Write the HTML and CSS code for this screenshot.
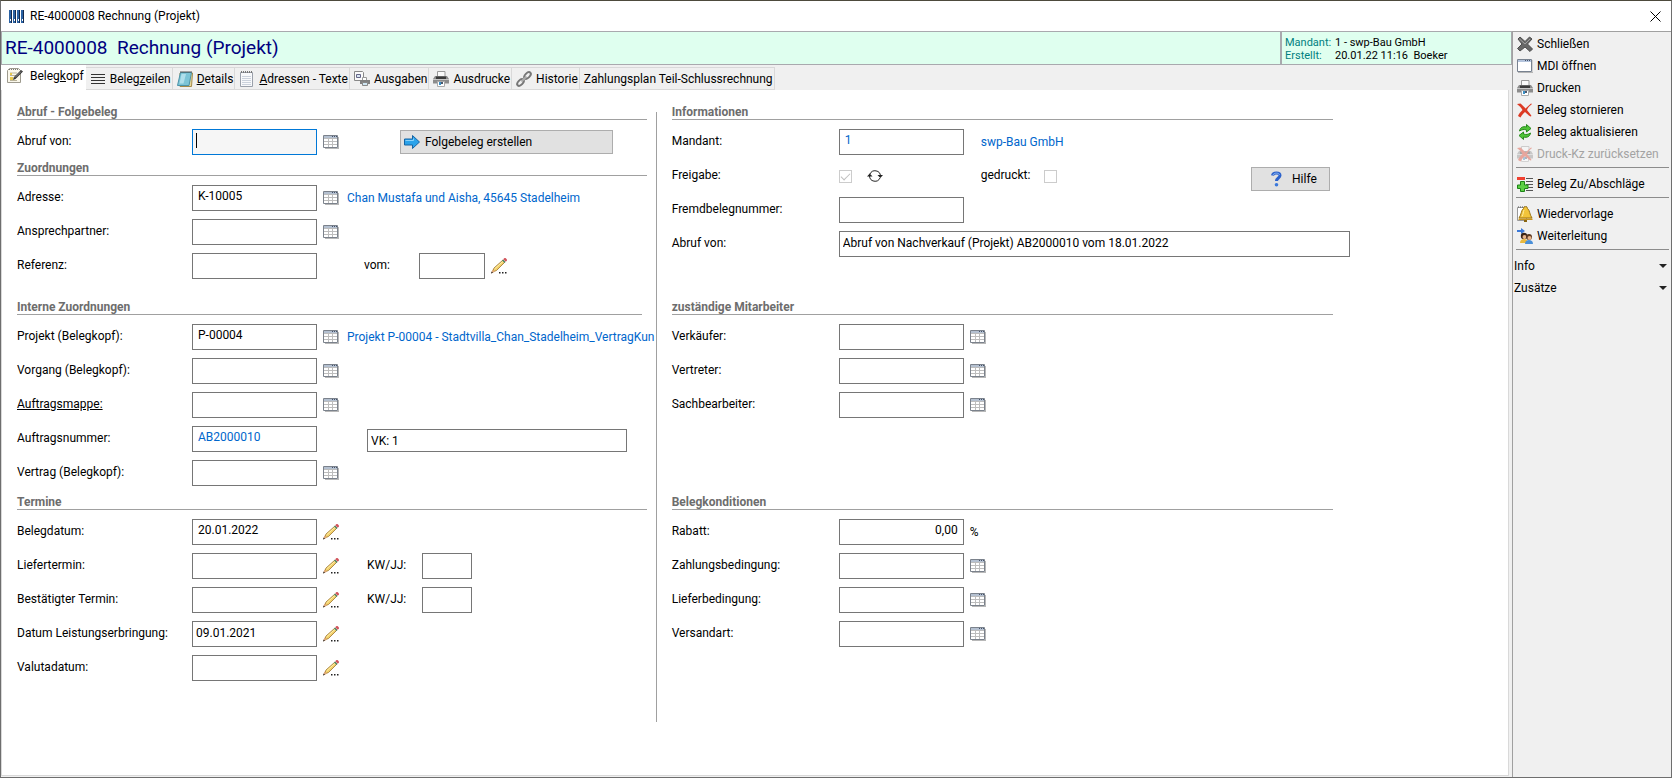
FILE: index.html
```html
<!DOCTYPE html>
<html lang="de">
<head>
    <meta charset="UTF-8">
    <meta name="viewport" content="width=device-width, initial-scale=1.0">
    <title>RE-4000008 Rechnung (Projekt)</title>
    <link rel="stylesheet" href="styles.css">
</head>
<body>
    <!-- icon set -->
    <svg class="sprite" aria-hidden="true">
        <symbol id="i-table" viewBox="0 0 16 14">
            <path d="M2 13.500h14M15.500 2v12" stroke="#b8b8b8" fill="none"/>
            <path d="M.500.500h14v12H.500z" fill="#fff" stroke="#7b828c"/>
            <path d="M1 1h13v2H1z" fill="#b4c0d0"/>
            <path d="M9 1.500h1M11 1.500h1M13 1.500h1" stroke="#46536b"/>
            <path d="M1 3.500h13M1 6.500h13M1 9.500h13M5.500 4v8M9.500 4v8" stroke="#bdbdbd"/>
        </symbol>
        <symbol id="i-pencil" viewBox="0 0 16 16">
            <path d="M1.500 14l1.500-4L12 2l2 2-8.500 8.500z" fill="#f3d06a" stroke="#9a7430" stroke-width=".8"/>
            <path d="M3.500 11L12 3.300" stroke="#fff0a8"/>
            <path d="M11 2.500l2.500 2.500 1-1L12 1.500z" fill="#4f8a6b"/>
            <path d="M12.200 1.200L13.500 0h1L16 1.500v1l-1.300 1.200z" fill="#d2545c"/>
            <path d="M0 15.500L1.500 11.500l2.500 2.300z" fill="#e0a878"/>
            <path d="M0 15.500l.700-2 1.300 1.200z" fill="#222"/>
            <path d="M8 14h1.500v1.500H8zM11 14h1.500v1.500H11zM14 14h1.500v1.500H14z" fill="#222"/>
        </symbol>
        <symbol id="i-arrow" viewBox="0 0 16 16">
            <path d="M.5 5h8V1.500L15.500 8l-7 6.500V11h-8z" fill="#2ba3ea" stroke="#1565a5"/>
            <path d="M1.500 6.500h8v-2" fill="none" stroke="#8ad3fb"/>
        </symbol>
        <symbol id="i-printer" viewBox="0 0 16 16">
            <path d="M4.500 6V.5h7.500V6" fill="#fafafa" stroke="#999"/>
            <path d="M2 5h12l2 3v4.500H0V8z" fill="#8c8c8c"/>
            <path d="M3 5.500h10V8H3z" fill="#3b3b3b"/>
            <path d="M0 8.500h16" stroke="#c8c8c8"/>
            <path d="M4.500 10.500h7v5h-7z" fill="#fff" stroke="#aaa"/>
            <path d="M6 11h2v3H6z" fill="#3a8fc5"/>
            <path d="M8 11h2v2H8z" fill="#4c586c"/>
        </symbol>
        <symbol id="i-edit" viewBox="0 0 16 16">
            <path d="M.5 2.500l2-2h9l2 2v12H.5z" fill="#fbf8ec" stroke="#9d9a8e"/>
            <path d="M2 1.500h9" stroke="#777" stroke-dasharray="1 1"/>
            <path d="M3 5h7M3 7.500h6M3 10h4M3 12.500h7" stroke="#b9b39a"/>
            <path d="M3 5h2v2H3zM3 9h3v3H3z" fill="#e8c84c"/>
            <path d="M6 12l1-3 7-7 2 1.500L8.500 11z" fill="#333"/>
            <path d="M8 9.500L14 3.500" stroke="#999"/>
        </symbol>
        <symbol id="i-lines" viewBox="0 0 16 16">
            <path d="M1 3.500h14M1 6.500h14M1 9.500h14M1 12.500h14" stroke="#333"/>
        </symbol>
        <symbol id="i-notepad" viewBox="0 0 16 16">
            <path d="M3 2h12.500l-1 13.500H3z" fill="#e8d79a" stroke="#a48a4a"/>
            <path d="M3.500 1.500h11L12 14.500H.5z" fill="#7cc4d6" stroke="#4b93a8"/>
            <path d="M4.500 3L2.500 12.500h4L9 3z" fill="#c6ebf3" opacity=".7"/>
            <path d="M3.500 1h11" stroke="#555" stroke-width="2" stroke-dasharray="1 1"/>
        </symbol>
        <symbol id="i-sheet" viewBox="0 0 16 16">
            <path d="M1.500 1.500h12v14h-12z" fill="#f8f9fb" stroke="#9aa0aa"/>
            <path d="M3 7.500h9M3 9.500h9M3 11.500h9M3 13.500h9M3 5.500h9" stroke="#cbd2dc"/>
            <path d="M2 1h11" stroke="#777" stroke-width="2" stroke-dasharray="1 1"/>
        </symbol>
        <symbol id="i-output" viewBox="0 0 16 16">
            <path d="M.500.500h8l1 1V9.500H.5z" fill="#fafafa" stroke="#888"/>
            <path d="M2.500 3.500h4v3h-4z" fill="#d9e6f3" stroke="#668"/>
            <path d="M8.500 9V6.500h4V9" fill="#fff" stroke="#999"/>
            <path d="M6 9h10v4H6z" fill="#808080"/>
            <path d="M8.500 11.500h5v3h-5z" fill="#cfe6f2" stroke="#888"/>
        </symbol>
        <symbol id="i-chain" viewBox="0 0 16 16">
            <g fill="none" stroke="#777" stroke-width="2">
                <ellipse cx="11.500" cy="4.500" rx="4" ry="2.300" transform="rotate(-45 11.500 4.500)"/>
                <ellipse cx="4.500" cy="11.500" rx="4" ry="2.300" transform="rotate(-45 4.500 11.500)"/>
                <path d="M5.500 10.500l5-5" stroke="#aaa"/>
            </g>
        </symbol>
        <symbol id="i-close" viewBox="0 0 16 16">
            <path d="M1 3l2-2 5 4.500L12.500 1 15 3 10.500 8l5 5-2.500 2.500L8 11l-5 4-2.500-2.500L5 8z" fill="#686868" stroke="#4d4d4d"/>
            <path d="M2.500 3L8 8l5-5" fill="none" stroke="#a0a0a0"/>
        </symbol>
        <symbol id="i-window" viewBox="0 0 16 14">
            <path d="M1 13.500h15V1" fill="none" stroke="#b5b5b5"/>
            <path d="M.500.500h14v12H.500z" fill="#fff" stroke="#788290"/>
            <path d="M1 1h13v2H1z" fill="#b4c4dc"/>
            <path d="M8 1.500h1M10 1.500h1M12 1.500h1" stroke="#46536b"/>
        </symbol>
        <symbol id="i-cancel" viewBox="0 0 16 16">
            <path d="M0 2l3.500-.5C6 3.500 7 5 8.500 6.500L14 1.500l1 .5c-2.500 2-4 3.500-5 6 1.500 2 3 3.500 4.500 6l-1 .5c-2.500-1.500-3.500-3-5.500-4.500-2 1.500-3 3-4.500 5.500L1 14c1-2.500 2.500-4 4.500-6C4 5.500 2.500 4 0 2z" fill="#dc3a24"/>
        </symbol>
        <symbol id="i-refresh" viewBox="0 0 16 16">
            <path d="M2.500 7C3 3.500 6 2 9.500 3V.5L14 4.500 9.500 8V6C7 5 5 5.500 2.500 7z" fill="#4fc437" stroke="#278a1c"/>
            <path d="M13.500 9c-.5 3.500-3.500 5-7 4v2.500L2 11.500 6.500 8v2c2.500 1 4.500.5 7-1z" fill="#4fc437" stroke="#278a1c"/>
        </symbol>
        <symbol id="i-lineitems" viewBox="0 0 16 16">
            <path d="M9 2.500h7M9 5.500h7M9 8.500h7M11 11.500h5M9 14.500h7" stroke="#555"/>
            <path d="M0 1h8v3H0z" fill="#ef4030"/>
            <path d="M3.500 5.500h4V9H11v3.500H7.500V15.500h-4v-3H.5V9h3z" fill="#5cd044" stroke="#1d8417"/>
        </symbol>
        <symbol id="i-bell" viewBox="0 0 16 16">
            <path d="M.5 1.500h9v13h-9z" fill="#fff" stroke="#999"/>
            <path d="M1 1h9" stroke="#555" stroke-dasharray="1 1"/>
            <path d="M6.500 2.500c0-2.500 4-2.500 4 0 2.500 2 2 6 4.500 9.500H2C4.500 8.500 4 4.500 6.500 2.500z" fill="#f2c43a" stroke="#9a7312"/>
            <path d="M7 4c-1 2-.5 4-2 6.500" fill="none" stroke="#fff0a0"/>
            <path d="M1.500 12.500h14v1.500h-14z" fill="#c9951d"/>
            <path d="M7 14h3v2H7z" fill="#8a6510"/>
        </symbol>
        <symbol id="i-forward" viewBox="0 0 16 16">
            <path d="M0 2h4V0l4 3-4 3V4H0z" fill="#3a78d8"/>
            <circle cx="7" cy="8" r="3.200" fill="#3a2418"/>
            <circle cx="7.500" cy="9" r="2" fill="#e8b48a"/>
            <path d="M3 15c0-3 2-4 4-4s4 1 4 4z" fill="#eab93c"/>
            <circle cx="12" cy="9" r="3" fill="#5a3820"/>
            <circle cx="12.500" cy="10" r="2" fill="#e8b48a"/>
            <path d="M8 16c0-3 2-4 4-4s4 1 4 4z" fill="#4a8fd8"/>
        </symbol>
        <symbol id="i-sync" viewBox="0 0 16 14">
            <path d="M3 5a5.500 5.500 0 0 1 10.500 2M13 9A5.500 5.500 0 0 1 2.500 7" fill="none" stroke="#222"/>
            <path d="M0 7.500h5.500L2.700 4.500zM10.500 6H16l-2.700 3z" fill="#222"/>
        </symbol>
        <symbol id="i-help" viewBox="0 0 16 16">
            <path d="M4.500 4.500C5 1 12 1 12 4.500c0 2.500-3.500 2.500-3.500 5.500" fill="none" stroke="#2c62cc" stroke-width="3"/>
            <path d="M5 4C6 1.500 11 1.500 11.500 4" fill="none" stroke="#8db8f5"/>
            <circle cx="8.500" cy="13.700" r="1.800" fill="#3a78dc"/>
        </symbol>
        <symbol id="i-folders" viewBox="0 0 16 13">
            <path d="M0 0h3v13H0zM4 0h3v13H4zM8 0h3v13H8zM12 0h3v13h-3z" fill="#2a62a4"/>
            <path d="M2.500 0v13M6.500 0v13M10.500 0v13M14.500 0v13" stroke="#12294d"/>
            <path d="M1 9h1v2H1zM5 9h1v2H5zM9 9h1v2H9zM13 9h1v2h-1z" fill="#fff"/>
        </symbol>
    </svg>

    <div class="window">
        <header class="titlebar">
            <svg class="app-icon"><use href="#i-folders"/></svg>
            <span>RE-4000008 Rechnung (Projekt)</span>
            <button class="close" aria-label="Fenster schließen">
                <svg viewBox="0 0 11 11"><path d="M.500.500l10 10M10.500.500l-10 10" stroke="#000" fill="none"/></svg>
            </button>
        </header>

        <div class="body">
            <main class="main">
                <div class="banner">
                    <h1>RE-4000008  Rechnung (Projekt)</h1>
                    <dl class="meta">
                        <dt>Mandant:</dt><dd>1 - swp-Bau GmbH</dd>
                        <dt>Erstellt:</dt><dd>20.01.22 11:16  Boeker</dd>
                    </dl>
                </div>

                <nav class="tabs">
                    <button class="tab active"><svg><use href="#i-edit"/></svg><span>Beleg<u>k</u>opf</span></button>
                    <button class="tab"><svg><use href="#i-lines"/></svg><span>Beleg<u>z</u>eilen</span></button>
                    <button class="tab"><svg><use href="#i-notepad"/></svg><span><u>D</u>etails</span></button>
                    <button class="tab"><svg><use href="#i-sheet"/></svg><span><u>A</u>dressen - Texte</span></button>
                    <button class="tab"><svg><use href="#i-output"/></svg><span>Ausgaben</span></button>
                    <button class="tab"><svg><use href="#i-printer"/></svg><span>Ausdrucke</span></button>
                    <button class="tab"><svg><use href="#i-chain"/></svg><span>Historie</span></button>
                    <button class="tab"><span>Zahlungsplan Teil-Schlussrechnung</span></button>
                </nav>

                <form class="sheet">
                    <div class="divider"></div>

                    <section class="left">
                        <h2>Abruf - Folgebeleg</h2>
                        <div class="row single">
                            <label for="abruf">Abruf von:</label>
                            <input type="text" id="abruf" class="focused">
                            <button type="button" class="pick" aria-label="Beleg wählen"><svg><use href="#i-table"/></svg></button>
                            <div class="extra wide">
                                <button type="button" class="btn create"><svg><use href="#i-arrow"/></svg>Folgebeleg erstellen</button>
                            </div>
                        </div>
                        <h2>Zuordnungen</h2>
                        <div class="row">
                            <label for="adresse">Adresse:</label>
                            <input type="text" id="adresse" value="K-10005">
                            <button type="button" class="pick" aria-label="Adresse wählen"><svg><use href="#i-table"/></svg></button>
                            <a href="#" class="ref">Chan Mustafa und Aisha, 45645 Stadelheim</a>
                        </div>
                        <div class="row">
                            <label for="partner">Ansprechpartner:</label>
                            <input type="text" id="partner">
                            <button type="button" class="pick" aria-label="Ansprechpartner wählen"><svg><use href="#i-table"/></svg></button>
                        </div>
                        <div class="row">
                            <label for="referenz">Referenz:</label>
                            <input type="text" id="referenz">
                            <span></span>
                            <div class="extra near">
                                <label for="vom">vom:</label>
                                <input type="text" id="vom" class="short">
                                <button type="button" class="pick date" aria-label="Datum wählen"><svg><use href="#i-pencil"/></svg></button>
                            </div>
                        </div>
                    </section>

                    <section class="right">
                        <h2>Informationen</h2>
                        <div class="row">
                            <label for="mandant">Mandant:</label>
                            <input type="text" id="mandant" class="linked" value="1">
                            <span></span>
                            <a href="#" class="ref">swp-Bau GmbH</a>
                        </div>
                        <div class="row">
                            <label for="freigabe">Freigabe:</label>
                            <div class="check-group">
                                <input type="checkbox" id="freigabe" checked disabled>
                                <button type="button" class="sync" aria-label="Freigabe wechseln"><svg><use href="#i-sync"/></svg></button>
                            </div>
                            <span></span>
                            <div class="printed">
                                <label for="gedruckt">gedruckt:</label>
                                <input type="checkbox" id="gedruckt" disabled>
                                <button type="button" class="btn help"><svg><use href="#i-help"/></svg>Hilfe</button>
                            </div>
                        </div>
                        <div class="row">
                            <label for="fremd">Fremdbelegnummer:</label>
                            <input type="text" id="fremd">
                        </div>
                        <div class="row">
                            <label for="abruf-text">Abruf von:</label>
                            <input type="text" id="abruf-text" class="full" value="Abruf von Nachverkauf (Projekt) AB2000010 vom 18.01.2022">
                        </div>
                    </section>

                    <section class="left">
                        <h2 class="narrow">Interne Zuordnungen</h2>
                        <div class="row">
                            <label for="projekt">Projekt (Belegkopf):</label>
                            <input type="text" id="projekt" value="P-00004">
                            <button type="button" class="pick" aria-label="Projekt wählen"><svg><use href="#i-table"/></svg></button>
                            <a href="#" class="ref">Projekt P-00004 - Stadtvilla_Chan_Stadelheim_VertragKun</a>
                        </div>
                        <div class="row">
                            <label for="vorgang">Vorgang (Belegkopf):</label>
                            <input type="text" id="vorgang">
                            <button type="button" class="pick" aria-label="Vorgang wählen"><svg><use href="#i-table"/></svg></button>
                        </div>
                        <div class="row">
                            <label for="mappe"><u>Auftragsmappe:</u></label>
                            <input type="text" id="mappe">
                            <button type="button" class="pick" aria-label="Auftragsmappe wählen"><svg><use href="#i-table"/></svg></button>
                        </div>
                        <div class="row">
                            <label for="auftrag">Auftragsnummer:</label>
                            <input type="text" id="auftrag" class="linked" value="AB2000010">
                            <span></span>
                            <div class="extra">
                                <input type="text" class="vk" aria-label="Verkauf" value="VK: 1">
                            </div>
                        </div>
                        <div class="row">
                            <label for="vertrag">Vertrag (Belegkopf):</label>
                            <input type="text" id="vertrag">
                            <button type="button" class="pick" aria-label="Vertrag wählen"><svg><use href="#i-table"/></svg></button>
                        </div>
                    </section>

                    <section class="right">
                        <h2>zuständige Mitarbeiter</h2>
                        <div class="row">
                            <label for="verkaeufer">Verkäufer:</label>
                            <input type="text" id="verkaeufer">
                            <button type="button" class="pick" aria-label="Verkäufer wählen"><svg><use href="#i-table"/></svg></button>
                        </div>
                        <div class="row">
                            <label for="vertreter">Vertreter:</label>
                            <input type="text" id="vertreter">
                            <button type="button" class="pick" aria-label="Vertreter wählen"><svg><use href="#i-table"/></svg></button>
                        </div>
                        <div class="row">
                            <label for="sachbearbeiter">Sachbearbeiter:</label>
                            <input type="text" id="sachbearbeiter">
                            <button type="button" class="pick" aria-label="Sachbearbeiter wählen"><svg><use href="#i-table"/></svg></button>
                        </div>
                    </section>

                    <section class="left">
                        <h2>Termine</h2>
                        <div class="row">
                            <label for="belegdatum">Belegdatum:</label>
                            <input type="text" id="belegdatum" value="20.01.2022">
                            <button type="button" class="pick date" aria-label="Datum wählen"><svg><use href="#i-pencil"/></svg></button>
                        </div>
                        <div class="row">
                            <label for="liefertermin">Liefertermin:</label>
                            <input type="text" id="liefertermin">
                            <button type="button" class="pick date" aria-label="Datum wählen"><svg><use href="#i-pencil"/></svg></button>
                            <div class="extra">
                                <label for="kw1">KW/JJ:</label>
                                <input type="text" id="kw1" class="week">
                            </div>
                        </div>
                        <div class="row">
                            <label for="bestaetigt">Bestätigter Termin:</label>
                            <input type="text" id="bestaetigt">
                            <button type="button" class="pick date" aria-label="Datum wählen"><svg><use href="#i-pencil"/></svg></button>
                            <div class="extra">
                                <label for="kw2">KW/JJ:</label>
                                <input type="text" id="kw2" class="week">
                            </div>
                        </div>
                        <div class="row">
                            <label for="leistung">Datum Leistungserbringung:</label>
                            <input type="text" id="leistung" class="flush" value="09.01.2021">
                            <button type="button" class="pick date" aria-label="Datum wählen"><svg><use href="#i-pencil"/></svg></button>
                        </div>
                        <div class="row">
                            <label for="valuta">Valutadatum:</label>
                            <input type="text" id="valuta">
                            <button type="button" class="pick date" aria-label="Datum wählen"><svg><use href="#i-pencil"/></svg></button>
                        </div>
                    </section>

                    <section class="right">
                        <h2>Belegkonditionen</h2>
                        <div class="row">
                            <label for="rabatt">Rabatt:</label>
                            <input type="text" id="rabatt" class="number" value="0,00">
                            <span class="unit">%</span>
                        </div>
                        <div class="row">
                            <label for="zahlung">Zahlungsbedingung:</label>
                            <input type="text" id="zahlung">
                            <button type="button" class="pick" aria-label="Zahlungsbedingung wählen"><svg><use href="#i-table"/></svg></button>
                        </div>
                        <div class="row">
                            <label for="lieferung">Lieferbedingung:</label>
                            <input type="text" id="lieferung">
                            <button type="button" class="pick" aria-label="Lieferbedingung wählen"><svg><use href="#i-table"/></svg></button>
                        </div>
                        <div class="row">
                            <label for="versand">Versandart:</label>
                            <input type="text" id="versand">
                            <button type="button" class="pick" aria-label="Versandart wählen"><svg><use href="#i-table"/></svg></button>
                        </div>
                    </section>
                </form>
            </main>

            <aside class="sidebar">
                <button class="action"><svg><use href="#i-close"/></svg>Schließen</button>
                <button class="action"><svg><use href="#i-window"/></svg>MDI öffnen</button>
                <button class="action"><svg><use href="#i-printer"/></svg>Drucken</button>
                <button class="action"><svg><use href="#i-cancel"/></svg>Beleg stornieren</button>
                <button class="action"><svg><use href="#i-refresh"/></svg>Beleg aktualisieren</button>
                <button class="action" disabled><svg><use href="#i-printer"/><use href="#i-cancel"/></svg>Druck-Kz zurücksetzen</button>
                <hr>
                <button class="action"><svg><use href="#i-lineitems"/></svg>Beleg Zu/Abschläge</button>
                <hr>
                <button class="action"><svg><use href="#i-bell"/></svg>Wiedervorlage</button>
                <button class="action"><svg><use href="#i-forward"/></svg>Weiterleitung</button>
                <hr>
                <button class="group">Info</button>
                <button class="group">Zusätze</button>
            </aside>
        </div>
    </div>
</body>
</html>
```
FILE: styles.css
```css
* {
    box-sizing: border-box;
}

body {
    margin: 0;
    font-family: Roboto, "Open Sans", sans-serif;
    font-size: 12px;
    line-height: 16px;
    color: #000;
}

button,
input {
    font: inherit;
    color: inherit;
    margin: 0;
}

button {
    border: none;
    background: none;
    padding: 0;
}

svg {
    display: block;
    flex: none;
    width: 16px;
    height: 16px;
}

.sprite {
    position: absolute;
    width: 0;
    height: 0;
}

.window {
    display: flex;
    flex-direction: column;
    min-height: 100vh;
    border: 1px solid #6e6e6e;
    border-top-color: #4d4a3c;
    background: #f0f0f0;
}

/* title bar */
.titlebar {
    display: flex;
    align-items: center;
    height: 30px;
    padding: 0 10px 0 8px;
    background: #fff;
}

.titlebar .app-icon {
    height: 13px;
    margin-right: 5px;
}

.close {
    margin-left: auto;
}

.close svg {
    width: 11px;
    height: 11px;
}

.body {
    display: flex;
    flex: 1;
}

.main {
    display: flex;
    flex-direction: column;
    flex: 1;
    min-width: 0;
}

/* document header */
.banner {
    display: flex;
    height: 34px;
    border: 1px solid #a9a9ae;
    background: #dfffef;
}

.banner h1 {
    flex: 1;
    margin: 0;
    padding-left: 3px;
    font-size: 19px;
    font-weight: normal;
    line-height: 31px;
    color: #000080;
    white-space: pre;
}

.meta {
    display: grid;
    grid-template-columns: 50px 1fr;
    align-content: start;
    width: 231px;
    margin: 0;
    padding: 4px 0 0 3px;
    border-left: 2px solid #a9a9ae;
    font-size: 11px;
    line-height: 13px;
    white-space: pre;
}

.meta dt {
    color: #008080;
}

.meta dd {
    margin: 0;
}

/* tabs */
.tabs {
    display: flex;
    align-items: flex-end;
    height: 25px;
    padding-right: 3px;
    white-space: nowrap;
}

.tab {
    display: flex;
    align-items: center;
    gap: 4px;
    height: 23px;
    padding: 0 1px 0 4px;
    border: 1px solid #d9d9d9;
    border-left: none;
}

.tab.active {
    gap: 7px;
    height: 25px;
    padding: 0 1px 3px 6px;
    border-color: #fff;
    background: #fff;
}

/* form sheet */
.sheet {
    display: grid;
    grid-template-columns: minmax(0, 655fr) 1px minmax(0, 853fr);
    grid-template-rows: minmax(195px, auto) minmax(195px, auto) minmax(232px, auto);
    align-content: start;
    flex: 1;
    margin: 0 3px 1px 0;
    padding-top: 10px;
    border: 1px solid #d9d9d9;
    border-top: none;
    background: #fff;
}

.divider {
    grid-column: 2;
    grid-row: 1 / 4;
    margin-top: 12px;
    background: #a0a0a0;
}

.left {
    grid-column: 1;
    padding-left: 15px;
}

.right {
    grid-column: 3;
    padding: 0 158px 0 15px;
}

.left:nth-of-type(1),
.right:nth-of-type(2) {
    grid-row: 1;
}

.left:nth-of-type(3),
.right:nth-of-type(4) {
    grid-row: 2;
}

.left:nth-of-type(5),
.right:nth-of-type(6) {
    grid-row: 3;
}

h2 {
    height: 20px;
    margin: 0 9px 9px 0;
    padding-top: 4px;
    border-bottom: 1px solid #a0a0a0;
    font-size: 12px;
    line-height: 16px;
    color: #6d6d6d;
}

h2.narrow {
    margin-right: 14px;
}

.right h2 {
    margin-right: 17px;
}

.row {
    display: grid;
    grid-template-columns: 175px 125px 30px minmax(0, 1fr);
    align-items: center;
    height: 26px;
    margin-bottom: 8px;
    white-space: nowrap;
}

.row:last-child {
    margin-bottom: 0;
}

.row.single {
    margin-bottom: 1px;
}

.right .row {
    grid-template-columns: 167px 125px 17px minmax(0, 1fr);
}

.row label {
    padding-bottom: 3px;
}

.row input[type="text"] {
    width: 100%;
    height: 26px;
    padding: 0 5px 5px;
    border: 1px solid #767676;
    border-radius: 0;
    background: #fff;
    outline: none;
}

.row input[type="text"].focused {
    border-color: #0078d7;
    background: linear-gradient(#000, #000) 3px 3px / 1px 15px no-repeat, #f6f6f6;
}

.row input.linked,
.ref {
    color: #0066cc;
}

.row input[type="text"].flush {
    padding: 0 3px 3px;
}

.row input.number {
    text-align: right;
}

.row input[type="text"].full {
    grid-column: 2 / 5;
    padding: 0 3px 3px;
}

.ref {
    overflow: hidden;
    text-decoration: none;
}

.pick {
    padding-left: 6px;
}

.pick svg {
    height: 14px;
}

.pick.date svg {
    height: 16px;
}

.unit {
    padding-left: 6px;
}

.extra {
    display: flex;
    align-items: center;
    padding-left: 20px;
}

.extra.near {
    padding-left: 17px;
}

.extra.wide {
    padding-left: 53px;
}

.extra label {
    width: 55px;
}

.row .extra .short {
    width: 66px;
}

.row .extra .week {
    width: 50px;
}

.row .extra .vk {
    width: 260px;
    height: 23px;
    margin-top: 3px;
    padding: 0 3px;
}

.btn {
    display: flex;
    align-items: center;
    gap: 5px;
    height: 24px;
    padding: 0 3px;
    border: 1px solid #adadad;
    background: #e1e1e1;
}

.create {
    width: 213px;
}

.check-group,
.printed {
    display: flex;
    align-items: center;
}

input[type="checkbox"] {
    appearance: none;
    display: grid;
    place-items: center;
    width: 13px;
    height: 13px;
    border: 1px solid #ccc;
    background: #fff;
}

input[type="checkbox"]:checked::before {
    content: "";
    width: 4px;
    height: 8px;
    margin-bottom: 2px;
    border: solid #bfbfbf;
    border-width: 0 1px 1px 0;
    transform: rotate(45deg);
}

.sync {
    margin-left: 15px;
}

.sync svg {
    height: 14px;
}

.printed label {
    width: 63px;
}

.help {
    gap: 8px;
    width: 79px;
    margin: 3px 20px -3px auto;
    padding: 0 16px;
}

/* action list */
.sidebar {
    width: 159px;
    padding-top: 1px;
    border-top: 1px solid #a0a0a0;
    border-left: 1px solid #a0a0a0;
    white-space: nowrap;
}

.action,
.group {
    display: flex;
    align-items: center;
    gap: 4px;
    width: 100%;
    height: 22px;
    padding-left: 4px;
}

.action:disabled {
    color: #a3a3a3;
}

.action:disabled svg {
    opacity: 0.4;
}

.sidebar hr {
    height: 1px;
    margin: 2px 2px 5px 3px;
    border: none;
    background: #8c8c8c;
}

.group {
    justify-content: space-between;
    padding: 0 4px 0 1px;
}

.group::after {
    content: "";
    border: 4px solid transparent;
    border-top-color: #222;
    border-bottom: none;
}
```
